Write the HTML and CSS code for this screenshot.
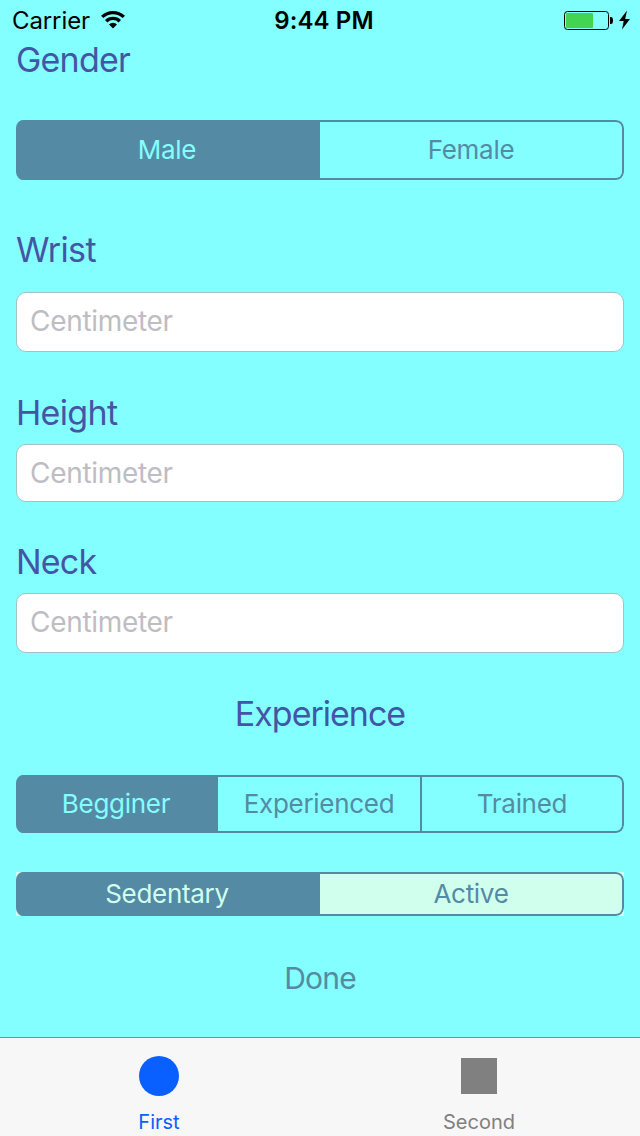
FILE: index.html
```
<!DOCTYPE html>
<html lang="en">
<head>
<meta charset="utf-8">
<title>Body profile</title>
<link rel="stylesheet" href="styles.css">
</head>
<body>
<header class="status">
  <div class="carrier"><span class="t carrier-name">Carrier</span>
    <svg class="wifi" width="26" height="18" viewBox="0 0 26 18"><path d="M1 4.800a17.500 17.500 0 0 1 24 0l-2.300 2.300a14 14 0 0 0-19.400 0zM5 9a11.500 11.500 0 0 1 16 0l-2.400 2.400a8 8 0 0 0-11.200 0zM9 13.400a5.700 5.700 0 0 1 8 0l-4 4z"/></svg>
  </div>
  <span class="t time">9:44 PM</span>
  <svg class="battery" width="68" height="22" viewBox="0 0 68 22"><rect x=".5" y="2.500" width="44" height="18" rx="3" fill="none" stroke="#000"/><rect x="2" y="4" width="27" height="15" rx="1" fill="#43d551"/><path d="M46 8h1q2 0 2 3.500t-2 3.500h-1z"/><path d="M63 1.500l-8 10.500h4.700l-1.700 8.500 8-10.500h-4.800z"/></svg>
</header>
<main class="form">
  <h2 class="label gender"><span class="t">Gender</span></h2>
  <div class="seg seg-gender"><div class="on"><span class="t">Male</span></div><div><span class="t">Female</span></div></div>
  <h2 class="label wrist"><span class="t">Wrist</span></h2>
  <div class="field f-wrist"><span class="t">Centimeter</span></div>
  <h2 class="label height"><span class="t">Height</span></h2>
  <div class="field f-height"><span class="t">Centimeter</span></div>
  <h2 class="label neck"><span class="t">Neck</span></h2>
  <div class="field f-neck"><span class="t">Centimeter</span></div>
  <h2 class="label exp"><span class="t">Experience</span></h2>
  <div class="seg seg-exp"><div class="on"><span class="t">Begginer</span></div><div><span class="t">Experienced</span></div><div><span class="t">Trained</span></div></div>
  <div class="seg-back"><div class="seg seg-act"><div class="on"><span class="t">Sedentary</span></div><div><span class="t">Active</span></div></div></div>
  <div class="done"><span class="t">Done</span></div>
</main>
<nav class="tabs">
  <div class="tab active"><svg width="40" height="40"><circle cx="20" cy="20" r="20" fill="#0a60ff"/></svg><span class="t">First</span></div>
  <div class="tab"><svg width="40" height="40"><rect x="2" y="2" width="36" height="36" fill="#808080"/></svg><span class="t">Second</span></div>
</nav>
</body>
</html>
```
FILE: styles.css
```
* { box-sizing: border-box; }
body { margin: 0; width: 640px; height: 1136px; display: flex; flex-direction: column; background: #84ffff; font-family: Inter, "Liberation Sans", sans-serif; overflow: hidden; }
.t { white-space: nowrap; }
.status { height: 40px; display: grid; grid-template-columns: 1fr auto 1fr; align-items: center; padding: 0 8px 0 12px; font-size: 24px; }
.carrier { display: flex; align-items: center; gap: 10px; }
.carrier-name { letter-spacing: -0.1px; }
.time { font-weight: 600; padding-left: 4px; letter-spacing: 0.1px; }
.battery { justify-self: end; }
.form { flex: 1; padding: 0 16px; display: flex; flex-direction: column; }
.label { margin: 0; height: 40px; line-height: 40px; font-size: 34px; font-weight: 400; color: #4455a5; letter-spacing: -0.8px; }
.seg { height: 60px; display: flex; border-radius: 8px; overflow: hidden; color: #558aa4; font-size: 26px; letter-spacing: -0.3px; }
.seg > div { flex: 0 0 304px; padding-bottom: 1px; display: flex; align-items: center; justify-content: center; border: solid #558aa4; border-width: 2px 0; }
.seg > div:last-child { border-right-width: 2px; border-radius: 0 8px 8px 0; }
.seg .on { background: #558aa4; color: #84ffff; padding-right: 2px; }
.seg-gender { margin-top: 40px; }
.wrist { margin-top: 50px; letter-spacing: -0.6px; }
.field { height: 60px; background: #fff; border: 1px solid #a0c4c4; border-radius: 10px; padding: 0 0 2px 13px; display: flex; align-items: center; color: #bdbdc3; font-size: 28px; letter-spacing: -0.3px; }
.f-wrist { margin-top: 22px; }
.height { margin-top: 41px; letter-spacing: -0.65px; }
.f-height { margin-top: 11px; height: 58px; padding-bottom: 0; }
.neck { margin-top: 40px; }
.f-neck { margin-top: 11px; }
.exp { margin-top: 41px; text-align: center; letter-spacing: -1px; }
.seg-exp { margin-top: 41px; height: 58px; }
.seg-exp > div { flex-basis: 202px; }
.seg-exp > div:last-child { flex-basis: 204px; border-left-width: 2px; }
.seg-back { margin-top: 39px; background: #d0ffee; }
.seg-act { height: 44px; }
.seg-act .on { color: #d0ffee; }
.done { margin-top: 42px; text-align: center; font-size: 30px; line-height: 40px; color: #558aa4; letter-spacing: -0.8px; }
.tabs { height: 99px; display: flex; background: #f7f7f7; border-top: 1px solid #659c9c; padding-right: 2px; }
.tab { flex: 0 0 318px; padding-top: 18px; display: flex; flex-direction: column; align-items: center; font-size: 20px; color: #808080; }
.tab + .tab { flex-basis: 322px; }
.tab .t { margin-top: 14px; line-height: 24px; }
.active { color: #0a60ff; }
```
